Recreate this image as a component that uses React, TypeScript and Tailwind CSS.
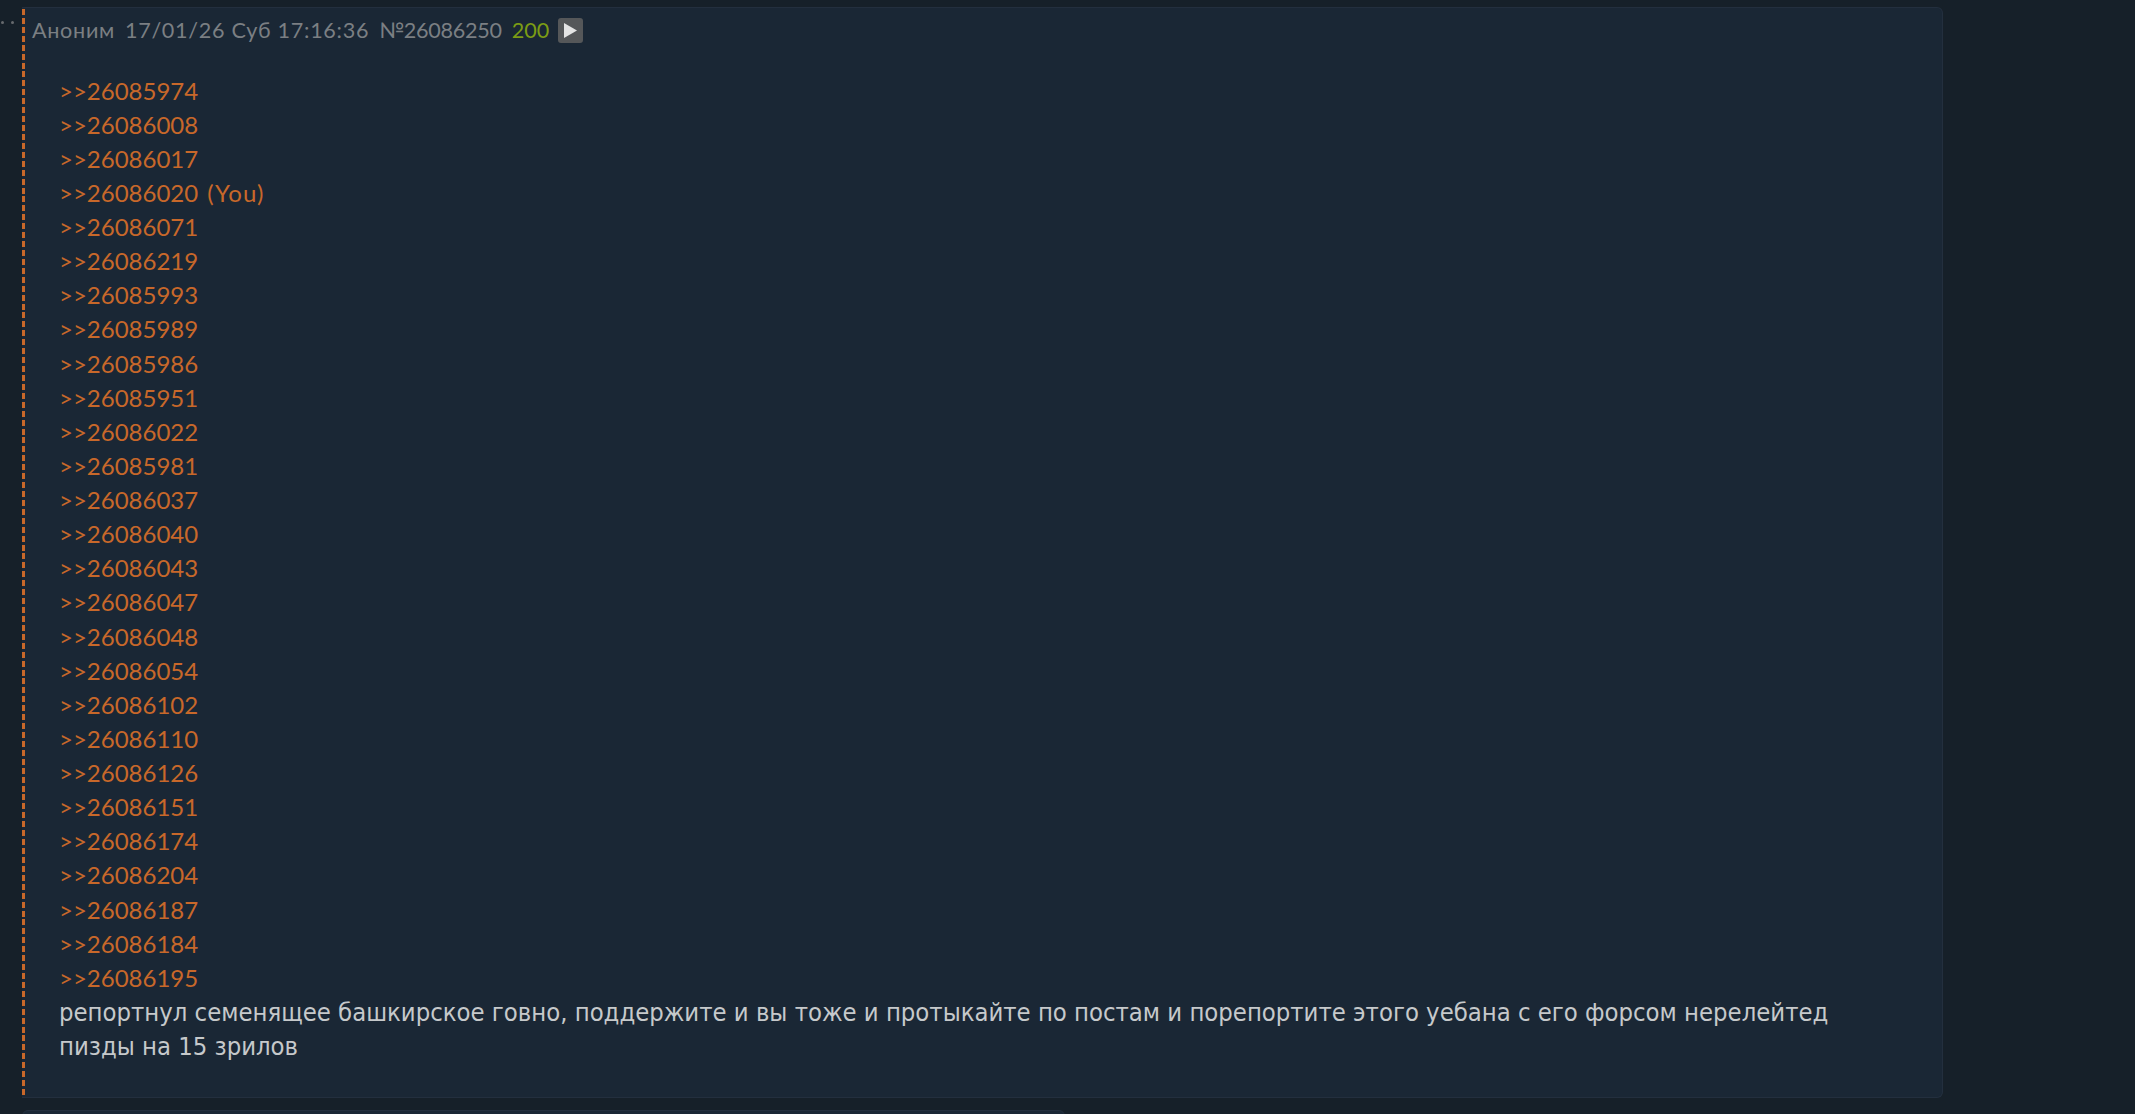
const replies = [
  '26085974', '26086008', '26086017', '26086020', '26086071', '26086219', '26085993',
  '26085989', '26085986', '26085951', '26086022', '26085981', '26086037', '26086040', '26086043',
  '26086047', '26086048', '26086054', '26086102', '26086110', '26086126', '26086151', '26086174',
  '26086204', '26086187', '26086184', '26086195',
];

const Post = () => (
  <div className="flex h-[1091px] w-[1921px] shrink-0 rounded-r-md border border-l-0 border-[#232f3e] bg-[#1a2735]">
    <div className="mt-[1px] h-[1087px] w-[3px] shrink-0 bg-[repeating-linear-gradient(to_bottom,#c8682a_0,#c8682a_6px,transparent_6px,transparent_8.926px)]" />
    <div className="pl-[7px] pt-[4px]">
      <div className="flex h-[36px] items-center font-['Lato',sans-serif] text-[21.6px] text-[#7b7f83]">
        <span className="tracking-[0.7px]">Аноним</span>
        <span className="ml-[10px] tracking-[0.7px]">17/01/26 Суб 17:16:36</span>
        <span className="ml-[10px] tracking-[-0.3px]">№26086250</span>
        <span className="ml-[10px] text-[#7c9c14]">200</span>
        <span className="ml-[9px] flex h-[25px] w-[25px] items-center justify-center rounded-[3px] bg-[#555759]">
          <svg width="13" height="15" viewBox="0 0 13 15"><path d="M0 0L13 7.5L0 15Z" fill="#e4e4e4" /></svg>
        </span>
      </div>
      <div className="mt-[25.6px] w-[1800px] pl-[27px] leading-[34.13px]">
        {replies.map(r => (
          <div key={r} className="font-['Lato',sans-serif] text-[24px] text-[#c8682a]">
            &gt;&gt;{r}
            {r === '26086020' && <span className="ml-[2px] tracking-[1px]"> (You)</span>}
          </div>
        ))}
        <div className="font-['DejaVu_Sans_Condensed',sans-serif] text-[25.4px] text-[#c6c9cb]">
          репортнул семенящее башкирское говно, поддержите и вы тоже и протыкайте по постам и порепортите этого уебана с его форсом нерелейтед пизды на 15 зрилов
        </div>
      </div>
    </div>
  </div>
);

export default function App() {
  return (
    <div className="relative h-[1114px] w-[2135px] overflow-hidden bg-[#162029] pl-[22px] pt-[8px]">
      <div className="absolute left-[1px] top-[21px] flex gap-[7px]">
        <span className="h-[3px] w-[3px] rounded-full bg-[#666a6e]" />
        <span className="h-[3px] w-[3px] rounded-full bg-[#666a6e]" />
      </div>
      <div className="-mt-[1px]">
        <Post />
      </div>
      <div className="mt-[12px] h-[20px] w-[1043px] rounded-t-md border border-[#232f3e] bg-[#1a2735]" />
    </div>
  );
}
